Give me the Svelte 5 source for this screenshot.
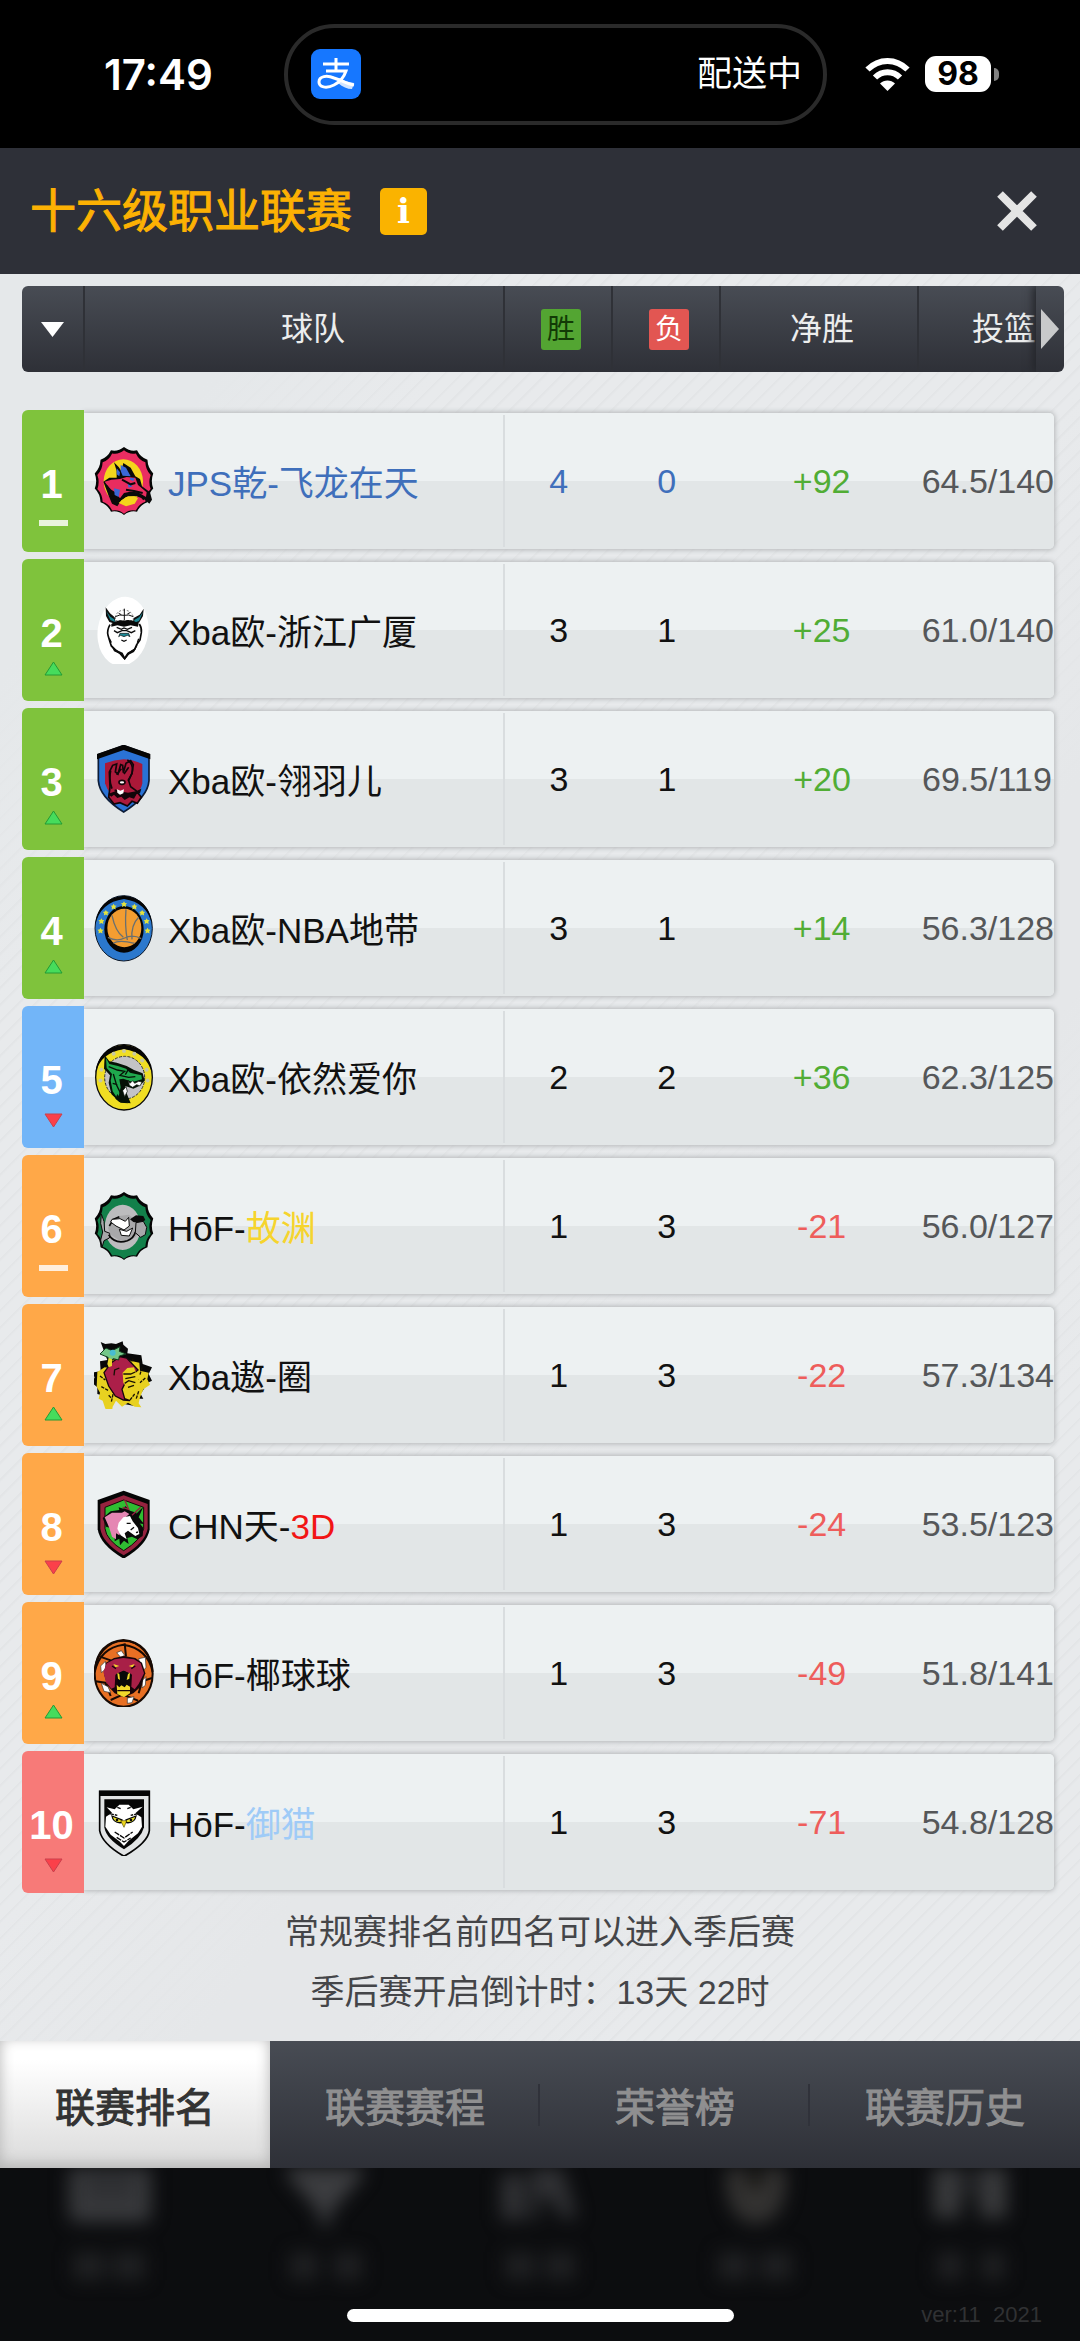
<script>
  const teams = [
    { rank: 1, tier: 'green', trend: 'same', name: 'JPS乾-飞龙在天', own: true, win: 4, loss: 0, diff: '+92', shots: '64.5/140' },
    { rank: 2, tier: 'green', trend: 'up', name: 'Xba欧-浙江广厦', win: 3, loss: 1, diff: '+25', shots: '61.0/140' },
    { rank: 3, tier: 'green', trend: 'up', name: 'Xba欧-翎羽儿', win: 3, loss: 1, diff: '+20', shots: '69.5/119' },
    { rank: 4, tier: 'green', trend: 'up', name: 'Xba欧-NBA地带', win: 3, loss: 1, diff: '+14', shots: '56.3/128' },
    { rank: 5, tier: 'blue', trend: 'down', name: 'Xba欧-依然爱你', win: 2, loss: 2, diff: '+36', shots: '62.3/125' },
    { rank: 6, tier: 'orange', trend: 'same', name: 'HōF-', tail: '故渊', tone: 'gold', win: 1, loss: 3, diff: '-21', shots: '56.0/127' },
    { rank: 7, tier: 'orange', trend: 'up', name: 'Xba遨-圈', win: 1, loss: 3, diff: '-22', shots: '57.3/134' },
    { rank: 8, tier: 'orange', trend: 'down', name: 'CHN天-', tail: '3D', tone: 'scarlet', win: 1, loss: 3, diff: '-24', shots: '53.5/123' },
    { rank: 9, tier: 'orange', trend: 'up', name: 'HōF-椰球球', win: 1, loss: 3, diff: '-49', shots: '51.8/141' },
    { rank: 10, tier: 'red', trend: 'down', name: 'HōF-', tail: '御猫', tone: 'sky', win: 1, loss: 3, diff: '-71', shots: '54.8/128' }
  ];
  const tabs = ['联赛排名', '联赛赛程', '荣誉榜', '联赛历史'];
  let current = $state(0);

  // Badge outline with pointed lobes around an ellipse
  function lobes(cx, cy, rx, ry, n) {
    let d = '';
    for (let i = 0; i <= n; i++) {
      const a = (i / n) * Math.PI * 2 - Math.PI / 2;
      const m = a - Math.PI / n;
      const x = cx + rx * Math.cos(a);
      const y = cy + ry * Math.sin(a);
      const qx = cx + rx * 0.88 * Math.cos(m);
      const qy = cy + ry * 0.88 * Math.sin(m);
      d += i === 0 ? `M${x} ${y}` : `Q${qx} ${qy} ${x} ${y}`;
    }
    return d + 'Z';
  }
  const seal = lobes(90, 102, 90, 102, 14);
  const sealInner = lobes(90, 105, 82, 95, 14);

  // Stars on the upper arc of a ring
  function ring(cx, cy, rx, ry, angles) {
    return angles.map((deg) => {
      const a = (deg * Math.PI) / 180;
      return [cx + rx * Math.cos(a), cy - ry * Math.sin(a)];
    });
  }
  const arc = ring(132, 174, 71, 72, [-6, 17, 40, 64, 90, 116, 140, 163, 186]);
  const arcLow = ring(132, 623, 71, 80, [-6, 17, 40, 64, 90, 116, 163, 186]);
</script>

{#snippet crest(n)}
  {#if n === 1}
    <svg class="crest" viewBox="0 0 180 204" aria-hidden="true">
      <path d={seal} fill="#050505" />
      <path d={sealInner} fill="#ea2d62" />
      <ellipse cx="88" cy="103" rx="59" ry="66" fill="#f4d51c" />
      <path d="M28 104l18-12 22 0 0-20-8-26 14 14 8 12 6-24 22 14 14 26 14 8 6 22 24 18 6 22-8 12-16-14-22-8-26 0-20 12-12 18-16-8-10-24z" fill="#0a0a0a" />
      <path d="M32 104l20-6 26-2 20-6 26 2 8 22 26 22-2 14-24-14-24-2-18 4-12 16-14-18-12-8-10-10z" fill="#e92c5f" />
      <path d="M80 54l16 8 14 26-24-2-6-14zM68 64l10 12-2 12-8-6zM60 124l18 4-4 22-12-6zM100 108l16 10-12 4zM108 92l14 2-4 8-10-4z" fill="#3b68d8" />
      <path d="M38 116l26 42M84 98l26 14 14-4M96 128l24 4 26 6M140 146l10 12" fill="none" stroke="#0a0a0a" stroke-width="6" />
      <path d="M74 168l22-18 24-2 12 6-10 16-26 8z" fill="#f4d51c" />
    </svg>
  {:else if n === 2}
    <svg class="crest" viewBox="42 78 180 204" aria-hidden="true">
      <ellipse cx="129" cy="184" rx="76" ry="104" transform="rotate(8 129 184)" fill="#fff" />
      <path d="M77 112l13 18 14 12 4 20-20-6-10-18zM191 116l-12 18-18 10-4 18 20-4 12-20z" fill="#101010" />
      <path d="M79 124l12 16 12 8 2 8-14-6zM189 126l-12 16-14 8-1 8 15-5z" fill="#1b8794" />
      <path d="M106 142q4-20 26-22 24 2 28 22v10h-54z" fill="#fff" stroke="#333" stroke-width="2" stroke-dasharray="6 5" />
      <path d="M133 116v34M106 140q14-8 26-4 14-4 28 4M116 130l8 4M142 132l8-4" stroke="#111" stroke-width="3" fill="none" />
      <path d="M94 162q20-14 38-10 20-6 44 8l-2 10-22-4-20 4-20-4-18 4z" fill="#0a0a0a" />
      <path d="M90 164q-10 18-6 32l6 20 4 12 12 12 14 10 14 16 12-16 18-12 6-14 10-14 4-22q2-14-6-26" fill="none" stroke="#0a0a0a" stroke-width="5" />
      <path d="M92 222l18 18 18 8 6 12 8-12 18-10 14-14-12 22-16 8-12 16-14-18-18-8z" fill="#0a0a0a" />
      <path d="M110 172l14 6 8-4 10 4 14-6M102 182l10 6 14-6h14l14 6 12-6M88 206l6 12M176 206l-4 12M124 210l8 4 8-4" stroke="#0a0a0a" stroke-width="4" fill="none" />
      <path d="M116 200l4-10h26l4 10-8-4-10 4-10-4z" fill="#1b8794" stroke="#0a0a0a" stroke-width="2" />
    </svg>
  {:else if n === 3}
    <svg class="crest" viewBox="42 525 180 204" aria-hidden="true">
      <path d="M131 527l76 27v78q-4 50-76 94-72-44-76-94v-78z" fill="#2a72d5" stroke="#0d1d38" stroke-width="5" />
      <path d="M131 524l80 28v16l-80-28-80 28v-16z" fill="#050505" />
      <path d="M75 580q28-10 56-12 32 2 56 14v58q-6 34-56 60-46-24-56-60z" fill="#ab1838" />
      <path d="M88 606l10-20 12-4-4 24 8 6 8-28 6 2 2 22 8-28 14-8 8 12-4 26-10 22 6 18 16 12 16 20-12 18-16-6-14 14-22-10-18 4-16-20 4-30z" fill="#ac1a3c" stroke="#120509" stroke-width="5" />
      <path d="M110 614l14-18M132 612l14-20M142 570q20 12 14 40l-12 22M92 602q-6 30 4 54M104 660l40 16 28-8" fill="none" stroke="#120509" stroke-width="5" />
      <path d="M84 672l10 8 8-6 10 10 12-4 10 10 14-8 14 4 8-14 10-2 4-14-16 8-24 4-34-6z" fill="#120509" />
      <ellipse cx="126" cy="637" rx="9" ry="6" fill="#fff" stroke="#120509" stroke-width="5" />
      <path d="M111 658l10 4 11-4-2 12-10 4-8-6z" fill="#fff" />
    </svg>
  {:else if n === 4}
    <svg class="crest" viewBox="42 72 180 204" aria-hidden="true">
      <ellipse cx="131" cy="175" rx="86" ry="98" fill="#2b78cd" stroke="#0b1524" stroke-width="3" />
      <path d="M46 165q6-80 86-88 78 8 84 88-14-68-84-78-72 10-86 78z" fill="#050505" />
      <ellipse cx="132" cy="178" rx="59" ry="70" fill="#050505" />
      <ellipse cx="133" cy="174" rx="51" ry="58" fill="#f39d31" />
      <path d="M96 136q10 48 34 66M138 118q-4 50 4 92M176 142q-24 24-20 66M84 202q26 14 50 2t50 2M100 220q16-12 64 0" fill="none" stroke="#6a7070" stroke-width="4" />
      {#each arc as [x, y]}
        <path d={`M${x} ${y - 8}l3 5 6 1-4 4 1 7-6-3-6 3 1-7-4-4 6-1z`} fill="#e5e33c" />
      {/each}
    </svg>
  {:else if n === 5}
    <svg class="crest" viewBox="42 519 180 204" aria-hidden="true">
      <ellipse cx="132" cy="622" rx="85" ry="98" fill="#f0de23" stroke="#0a0a0a" stroke-width="4" />
      <path d="M46 612q6-80 86-88 78 8 84 88-14-64-84-74-72 10-86 74z" fill="#050505" />
      <ellipse cx="134" cy="623" rx="60" ry="64" fill="#c3c3c6" stroke="#333" stroke-width="3" stroke-dasharray="9 4" />
      {#each arcLow as [x, y]}
        <circle cx={x} cy={y} r="6" fill="#c9c9a0" />
      {/each}
      <path d="M74 556l14 18 22 4 30 10 22 12 26 10 6 22-16 16-18 8-24-8 4 22 12 30-34-4-24-24-8-34 4-22-18-20z" fill="#061206" />
      <path d="M78 564l10 18 26 6 24 8 12 12 34 8 2 12-28 8-28-10-12 2 4 24-8 36-16-24-6-32 4-20-16-18z" fill="#1fa84d" />
      <path d="M86 590l26 10 22 4-14 12 26 6 20-2M100 612l10 34 12 24M144 600l-8 14M158 640l26-4M98 640l14 4" fill="none" stroke="#061206" stroke-width="4" />
      <path d="M144 630l6 10 8-8 6 8 12-6 10 2-6 12-10-4-12 8-10-6zM128 662l10-12 4 14-8 16z" fill="#fff" stroke="#061206" stroke-width="2" />
      <path d="M112 672l10 14 24 14-24-2-16-12z" fill="#061206" />
    </svg>
  {:else if n === 6}
    <svg class="crest" viewBox="0 0 180 204" aria-hidden="true">
      <path d={seal} fill="#050505" />
      <path d={sealInner} fill="#12804a" />
      <ellipse cx="86" cy="106" rx="54" ry="68" fill="#bcbcbe" />
      <path d="M22 66l8 22 2 30 16 6-2 14-16 8-6 20-4-22 6-24-6-26z" fill="#a8a8aa" stroke="#0a0a0a" stroke-width="3" />
      <path d="M42 108l12-24 20-12 30-4 22 16 8 24-8 26-22 14-30-4-24-16z" fill="#a8a8aa" />
      <path d="M44 128q20 30 56 18 20-8 24-26M46 102l12-20 18-8" fill="none" stroke="#0a0a0a" stroke-width="5" />
      <path d="M54 82l24-2 16 8 10-12 2 26-16 12-24-12-16-12zM76 112l22 6 18-10-10 24-24-2z" fill="#fff" stroke="#0a0a0a" stroke-width="3" />
      <path d="M108 82l18-12 22 2 6 12-14 10-22-4z" fill="#0a0a0a" />
      <path d="M126 92l22-4 10 18-4 22-14 8-16-14z" fill="#a8a8aa" stroke="#0a0a0a" stroke-width="3" />
    </svg>
  {:else if n === 7}
    <svg class="crest" viewBox="42 513 180 204" aria-hidden="true">
      <path d="M62 516l14 6 18-2 14 2 20-8 2 10 14 12-2 14 42 6 4 26 28 10-10 20 10 20-20 10-4 14-10 16 8 14-18 0-8 22-20-4-22-4-16-16-14 12 4 10-24-10-6-20-14-4v-20l-16-14 8-16-8-14 26-4-2-30 22-4-6-16z" fill="#080808" />
      <path d="M52 606l22-14 16 2 8-24 20-6 22 6 38 8 2 24 26 6-4 20 8 16-20 14-10 24-4 18 8 12-20-2-20-12-18 12-18-18-10 18-2 14-20-8-8-24-12-6 4-18-10-18z" fill="#e8d120" />
      <path d="M60 618l16 12M64 650l22 12M162 592l-8 20 20 18M196 624l-16 14M102 660l-8 36M86 676l8 8M176 664l-8 24M160 566l-12 18M186 592l-6 22M150 690l14-18" fill="none" stroke="#161004" stroke-width="4" stroke-dasharray="10 3" />
      <path d="M72 608l22-30 26-18 20 4 34 36-10 8-18-6-14 14 4 22-10 20 8 28 16 6-20-2-24-12-20-30z" fill="#ac1f49" stroke="#17060c" stroke-width="4" />
      <path d="M104 602l14-10M128 608l14-14 20-2 6 16 6 16 0 22-12 14-20-4-12-18z" fill="#e8d120" />
      <path d="M130 612l22 0 14-6M136 626l30-6M134 640l12-8 20 6M144 652l18-6M102 616l2-16 14-6" fill="none" stroke="#161004" stroke-width="4" />
      <path d="M60 552l18-18 18 8 24-12-2 14 20 8-20 6-2 12-16-4-12 10-4-14z" fill="#74c889" stroke="#10391d" stroke-width="3" />
      <circle cx="98" cy="548" r="9" fill="#48bdd2" />
      <path d="M82 582l4-18 10 4v20l-10 4z" fill="#ead92b" />
    </svg>
  {:else if n === 8}
    <svg class="crest" viewBox="42 60 180 204" aria-hidden="true">
      <path d="M131 62l78 28v88q-8 48-78 88-70-40-78-88V90z" fill="#050505" />
      <path d="M131 76l72 26v74q-8 42-72 80-64-38-70-80v-74z" fill="#96233f" />
      <path d="M131 90l60 22v64q-8 34-60 66-52-32-56-66v-64z" fill="#2fbd32" stroke="#150507" stroke-width="3" />
      <path d="M68 144l24-20 26-4-2-8 14 4 6-8 14 14 20 6-4 16 10 12 14 18-2 24-16 10-16-8-14 4 4 18-14-10-12 14-2-20-14 8 0-20-12-20-14-4z" fill="#0a0a0a" />
      <path d="M74 142l22-14 30 0 8-4 14 8-14 12-10 16 0 18-6 18-10-6 0 18-12-8-8-26-6-14z" fill="#e586b3" />
      <path d="M116 158l14-16 20-4 8 16 16 20 4 18-12 6-22-16-10 8 6 18-18-12-10-20z" fill="#fff" />
      <path d="M154 144l14-12 22-22-14 32 16 20-22-2z" fill="#0a0a0a" />
      <path d="M134 90l12 28-18-6M156 136l26-24" fill="none" stroke="#96233f" stroke-width="4" />
      <path d="M140 160l12 0M152 180l10-8M168 188l6-2" stroke="#0a0a0a" stroke-width="4" />
    </svg>
  {:else if n === 9}
    <svg class="crest" viewBox="42 507 180 204" aria-hidden="true">
      <ellipse cx="131" cy="611" rx="87" ry="99" fill="#e87024" stroke="#170a04" stroke-width="6" />
      <path d="M44 606q6-88 86-96 80 8 88 96-14-70-88-82-70 10-86 82zM134 520l4 40M60 560l34 12M46 634l30 4 16 40M216 624l-30 10-10 36M92 690l36-16 46 18" fill="none" stroke="#170a04" stroke-width="6" />
      <path d="M110 548l14-6 10 14-12 6zM176 566l20-4 2 30-12 16zM62 588l14-14 4 20-16 14zM64 640l20 10 8 18-20-4zM142 684l20-4-6 18-14 2zM188 630l10-10-2 26-10 8z" fill="#fff" stroke="#333" stroke-width="2" />
      <path d="M78 578l24-14 30-6 34 6 20 14 10 32-14 40-22 20-28 12-28-12-22-24-10-34z" fill="#170509" />
      <path d="M80 580l24-12 26-4 32 4 20 12 10 30-16 32-12 16-10-8 2-36-24-12-26 12-2 38-10 4-16-20-8-30z" fill="#a82047" />
      <path d="M108 612l22-10 24 10-4 24-6 16-12 8-16-12-4-24z" fill="#090909" />
      <path d="M100 582l18 6-12 4zM164 582l-18 6 12 4zM112 608l6 4 2 18-6-4zM150 608l-6 4-4 18 8-4zM110 644l8 8 6-6 10 6 6-8 10 6v20l-18 12-20-10z" fill="#f0d82b" />
      <path d="M96 588l12 8M166 588l-12 8M112 662l38 0" stroke="#170509" stroke-width="4" />
    </svg>
  {:else}
    <svg class="crest" viewBox="42 954 180 204" aria-hidden="true">
      <path d="M59 964h149v118q-4 36-76 77-66-38-73-77z" fill="#e2e4e5" stroke="#050505" stroke-width="5" />
      <path d="M57 962h152v16H57z" fill="#050505" />
      <path d="M73 988h119v84q-8 34-60 66-54-32-59-66z" fill="#060606" />
      <path d="M80 1012l24 6 14-14 28 0 14 14 28-8-22 20 18 12 2 28-12 20-28 22-14 16-14-14-26-20-16-24 2-30 18-12z" fill="#fff" />
      <path d="M96 1038l30 12-2 8q-24 2-28-20zM168 1038l-30 12 2 8q24 2 28-20z" fill="#ece32b" stroke="#060606" stroke-width="4" />
      <circle cx="111" cy="1050" r="4" fill="#060606" />
      <circle cx="153" cy="1050" r="4" fill="#060606" />
      <path d="M122 1052h18l-8 20z" fill="#ecd61c" stroke="#5a5000" stroke-width="2" />
      <path d="M86 1030l26 6M178 1030l-26 6M112 1012l10 4M152 1012l-10 4M104 1086l28 18 26-18M110 1102l22 14 20-12" fill="none" stroke="#060606" stroke-width="4" stroke-dasharray="16 3" />
    </svg>
  {/if}
{/snippet}

<div class="page">
  <header class="status">
    <span class="clock">17:49</span>
    <div class="island">
      <svg class="pay" viewBox="0 0 50 50" aria-hidden="true">
        <rect width="50" height="50" rx="9" fill="#1677ff" />
        <path d="M12 15h26M25 9v12M15 22h20c-2 6-6 11-12 14-8 4-15 2-15-3 0-6 8-7 15-4 7 2 13 6 20 7" fill="none" stroke="#fff" stroke-width="3" />
        <path d="M28 29c5 3 9 4 15 5l-2 6c-5 0-9-2-14-6z" fill="#fff" fill-opacity=".8" />
      </svg>
      <span>配送中</span>
    </div>
    <svg class="wifi" viewBox="0 0 45 34" aria-hidden="true">
      <path d="M2.500 12.500C14 1 31 1 42.500 12.500M10 20.500c7-7 18-7 25 0" fill="none" stroke="#fff" stroke-width="6" />
      <path d="M22.500 34l-7.500-7.500c4-4 11-4 15 0z" fill="#fff" />
    </svg>
    <div class="battery"><b>98</b><i></i></div>
  </header>

  <div class="titlebar">
    <h1>十六级职业联赛</h1>
    <button class="info" aria-label="说明">i</button>
    <button class="close" aria-label="关闭">
      <svg viewBox="0 0 40 40" aria-hidden="true"><path d="M3 3l34 34M37 3L3 37" stroke="#e4e4e4" stroke-width="8" /></svg>
    </button>
  </div>

  <main>
    <table>
      <thead>
        <tr>
          <th>
            <button aria-label="排序"><svg width="23" height="15" viewBox="0 0 23 15" aria-hidden="true"><path d="M0 0h23L11.500 15z" fill="#fff" /></svg></button>
          </th>
          <th class="club">球队</th>
          <th class="stat"><span class="tag win">胜</span></th>
          <th class="stat"><span class="tag loss">负</span></th>
          <th class="stat">净胜</th>
          <th class="last">
            <span>投篮</span>
            <button class="more" aria-label="更多"><svg width="18" height="40" viewBox="0 0 18 40" aria-hidden="true"><path d="M0 0l18 20L0 40z" fill="#c9cacb" /></svg></button>
          </th>
        </tr>
      </thead>
      <tbody>
        {#each teams as t}
          <tr class:own={t.own}>
            <td class="rank {t.tier}">
              <span>{t.rank}</span>
              <svg width="29" height="22" viewBox="0 0 29 22" aria-hidden="true">
                {#if t.trend === 'same'}
                  <path d="M0 9h29v6H0z" fill="#fff" fill-opacity=".82" />
                {:else if t.trend === 'up'}
                  <path d="M14.500 2l8.500 13H6z" fill="#46dc5c" stroke="#249a35" stroke-width="1" />
                {:else}
                  <path d="M6 7h17l-8.500 13z" fill="#fb404a" stroke="#c9404c" stroke-width="1" />
                {/if}
              </svg>
            </td>
            <td class="team">
              {@render crest(t.rank)}
              <span class="name">{t.name}{#if t.tail}<span class={t.tone}>{t.tail}</span>{/if}</span>
            </td>
            <td class="wins">{t.win}</td>
            <td class="losses">{t.loss}</td>
            <td class="diff {t.diff.startsWith('+') ? 'plus' : 'minus'}">{t.diff}</td>
            <td class="shots">{t.shots}</td>
          </tr>
        {/each}
      </tbody>
    </table>
    <p>常规赛排名前四名可以进入季后赛<br />季后赛开启倒计时：13天 22时</p>
  </main>

  <div class="tabs" role="tablist">
    {#each tabs as tab, i}
      <button role="tab" aria-selected={current === i} class:active={current === i} onclick={() => (current = i)}>{tab}</button>
    {/each}
  </div>

  <footer>
    <div class="dim" aria-hidden="true">
      <svg viewBox="0 0 110 130"><path d="M14-20h82v66q0 8-8 8H22q-8 0-8-8z" fill="#38393c" /><path d="M30 12h50M30 26h50" stroke="#242528" stroke-width="6" /><path d="M18 84h32v28H18zM58 84h32v28H58z" fill="#1f2022" /></svg>
      <svg viewBox="0 0 110 130"><path d="M16-20h78v26L60 46v12H50V46L16 6z" fill="#3c3d40" /><path d="M20 84h28v28H20zM64 84h28v28H64z" fill="#1f2022" /></svg>
      <svg viewBox="0 0 110 130"><path d="M16 6h24v46H16zM46-20h26l20 70H76L66 30H54v22h-8z" fill="#303134" /><path d="M20 84h30v28H20zM60 84h30v28H60z" fill="#1f2022" /></svg>
      <svg viewBox="0 0 110 130"><path d="M26-20h60v40q-4 34-30 36-26-2-30-36z" fill="#333231" /><path d="M46-10h18v30H46z" fill="#1a1917" /><path d="M18 84h32v28H18zM60 84h32v28H60z" fill="#1f2022" /></svg>
      <svg viewBox="0 0 110 130"><path d="M18-20h28v70H18zM64-20h28v70H64z" fill="#38393b" /><path d="M46-20h18v50H46z" fill="#1c1d20" /><path d="M22 84h26v28H22zM66 84h24v28H66z" fill="#1f2022" /></svg>
    </div>
    <div class="base">
      <span class="grabber"></span>
      <small>ver:11&nbsp; 2021</small>
    </div>
  </footer>
</div>

<style>
  :global(body) { margin: 0; background: #000; }
  .page {
    min-height: 100vh;
    display: flex;
    flex-direction: column;
    font-family: "Liberation Sans", "Noto Sans CJK SC", sans-serif;
    color: #111;
  }
  button { border: 0; padding: 0; background: none; font: inherit; color: inherit; cursor: pointer; }
  svg { display: block; }

  .status {
    height: 148px;
    box-sizing: border-box;
    display: flex;
    align-items: center;
    justify-content: space-between;
    padding: 0 80px 0 104px;
    background: #000;
    color: #fff;
  }
  .clock { font: 600 42px Inter, sans-serif; flex: 0 0 180px; }
  .island {
    box-sizing: border-box;
    flex: 0 1 543px;
    height: 101px;
    margin-right: 38px;
    padding: 0 21px 0 23px;
    border: 4px solid #2a2a2a;
    border-radius: 51px;
    display: flex;
    align-items: center;
    justify-content: space-between;
    font-size: 35px;
    line-height: 40px;
  }
  .pay { width: 50px; height: 50px; }
  .wifi { width: 45px; height: 34px; margin-right: 15px; }
  .battery { flex: 0 0 75px; display: flex; align-items: center; gap: 3px; }
  .battery b {
    width: 66px;
    background: #fff;
    color: #000;
    border-radius: 11px;
    font: 700 32px/36px Inter, sans-serif;
    text-align: center;
  }
  .battery i { width: 5px; height: 13px; background: #808080; border-radius: 0 5px 5px 0; }

  .titlebar {
    height: 126px;
    box-sizing: border-box;
    display: flex;
    align-items: center;
    padding: 0 43px 0 30px;
    background: #2e3038;
  }
  h1 {
    margin: 0;
    font-size: 46px;
    font-weight: 400;
    line-height: 50px;
    color: #fcb103;
    -webkit-text-stroke: 1px #fcb103;
  }
  .info {
    width: 47px;
    height: 47px;
    margin-left: 28px;
    border-radius: 5px;
    background: #fab300;
    color: #fff;
    font: 700 34px/47px "DejaVu Serif", serif;
  }
  .close { width: 40px; height: 40px; margin-left: auto; }

  main {
    padding: 12px 16px 19px 22px;
    background:
      linear-gradient(125deg, #e5e8ea 0 12%, transparent 22% 50%, #e5e7e9 62% 68%, transparent 80%),
      repeating-linear-gradient(135deg, #e3e5e7 0 1px, #e8eaec 3px 12px);
  }
  table, thead, tbody { display: block; }
  tr { display: grid; align-items: center; }
  th, td { padding: 0; font-weight: 400; text-align: center; white-space: nowrap; }

  thead tr {
    height: 86px;
    grid-template-columns: 63px 420fr 108fr 108fr 198fr 145fr;
    border-radius: 6px;
    overflow: hidden;
    background: linear-gradient(#484c54, #2e3037);
    color: #eceded;
    font-size: 32px;
    line-height: 36px;
  }
  th {
    height: 100%;
    box-sizing: border-box;
    display: flex;
    align-items: center;
    justify-content: center;
    border-right: 2px solid #2f3137;
  }
  th.club { padding-left: 38px; }
  th.stat { padding-left: 6px; }
  th.last { border: 0; justify-content: flex-end; }
  .more {
    width: 28px;
    height: 100%;
    padding-left: 5px;
    box-shadow: -3px 0 8px #24262b;
  }
  .tag { width: 40px; line-height: 41px; border-radius: 3px; font-size: 28px; }
  .tag.win { background: #53a532; color: #123a06; }
  .tag.loss { background: #e25652; color: #fff; }

  tbody { display: flex; flex-direction: column; gap: 7px; padding: 38px 10px 0 0; }
  tbody tr {
    height: 142px;
    grid-template-columns: 62px 421fr 108fr 108fr 198fr 135fr;
    font-size: 34px;
    line-height: 40px;
  }
  tbody tr::before {
    content: "";
    grid-area: 1 / 2 / 2 / 7;
    align-self: stretch;
    margin: 3px 0;
    border-radius: 0 5px 5px 0;
    background: linear-gradient(#edf1f2 50%, #e2e6e7 50%);
    box-shadow: 0 0 5px 1px #b4b7b9;
  }
  td { grid-row: 1; }
  .rank {
    grid-column: 1;
    align-self: stretch;
    display: flex;
    flex-direction: column;
    align-items: center;
    gap: 4px;
    padding-top: 51px;
    border-radius: 6px 0 0 6px;
    color: #fff;
    font-size: 40px;
    font-weight: 700;
    line-height: 46px;
  }
  .rank span { padding-right: 3px; }
  .green { background: #7fc33c; }
  .blue { background: #72b5f8; }
  .orange { background: #ffa848; }
  .red { background: #f77a78; }
  .team {
    grid-column: 2;
    height: 132px;
    display: flex;
    align-items: center;
    gap: 14px;
    padding-left: 10px;
    border-right: 2px solid #d9dddf;
  }
  .wins { grid-column: 3; }
  .losses { grid-column: 4; }
  .diff { grid-column: 5; padding-left: 4px; }
  .shots { grid-column: 6; }
  .crest { width: 60px; height: 68px; }
  .name { padding-top: 6px; font-size: 35px; }
  .own td { color: #3f6fbb; }
  .own .rank { color: #fff; }
  .gold { color: #f6d42d; }
  .scarlet { color: #f21515; }
  .sky { color: #9fcbf7; }
  tbody .plus { color: #51ad35; }
  tbody .minus { color: #ee5d5b; }
  tbody .shots { color: #555759; text-align: left; padding-left: 3px; }

  p { margin: 9px 0 0 -6px; text-align: center; font-size: 34px; line-height: 60px; color: #444548; }

  .tabs {
    height: 127px;
    display: grid;
    grid-template-columns: repeat(4, 1fr);
    background: linear-gradient(#484c54, #2e3037);
  }
  .tabs button {
    font-size: 40px;
    font-weight: 400;
    color: #8f8f90;
    -webkit-text-stroke: 1px currentColor;
    background: linear-gradient(#30323a, #30323a) right center / 2px 42px no-repeat;
  }
  .tabs button:last-child { background: none; }
  .tabs .active {
    color: #333;
    background: linear-gradient(#fff 15%, #dadada);
    box-shadow: inset 0 -4px 14px #b5b5b5;
  }

  footer {
    flex: 1;
    min-height: 173px;
    display: flex;
    flex-direction: column;
    justify-content: space-between;
    background: #0c0d0f;
    overflow: hidden;
  }
  .dim { display: flex; justify-content: space-around; padding: 0 3px; filter: blur(9px); }
  .dim svg { width: 110px; height: 130px; }
  .base {
    display: grid;
    grid-template-columns: 1fr 387px 1fr;
    align-items: center;
    padding: 0 38px 14px 39px;
  }
  .grabber { grid-column: 2; height: 13px; border-radius: 7px; background: #fff; }
  small { text-align: right; font-size: 22px; line-height: 24px; color: #303133; }
</style>
